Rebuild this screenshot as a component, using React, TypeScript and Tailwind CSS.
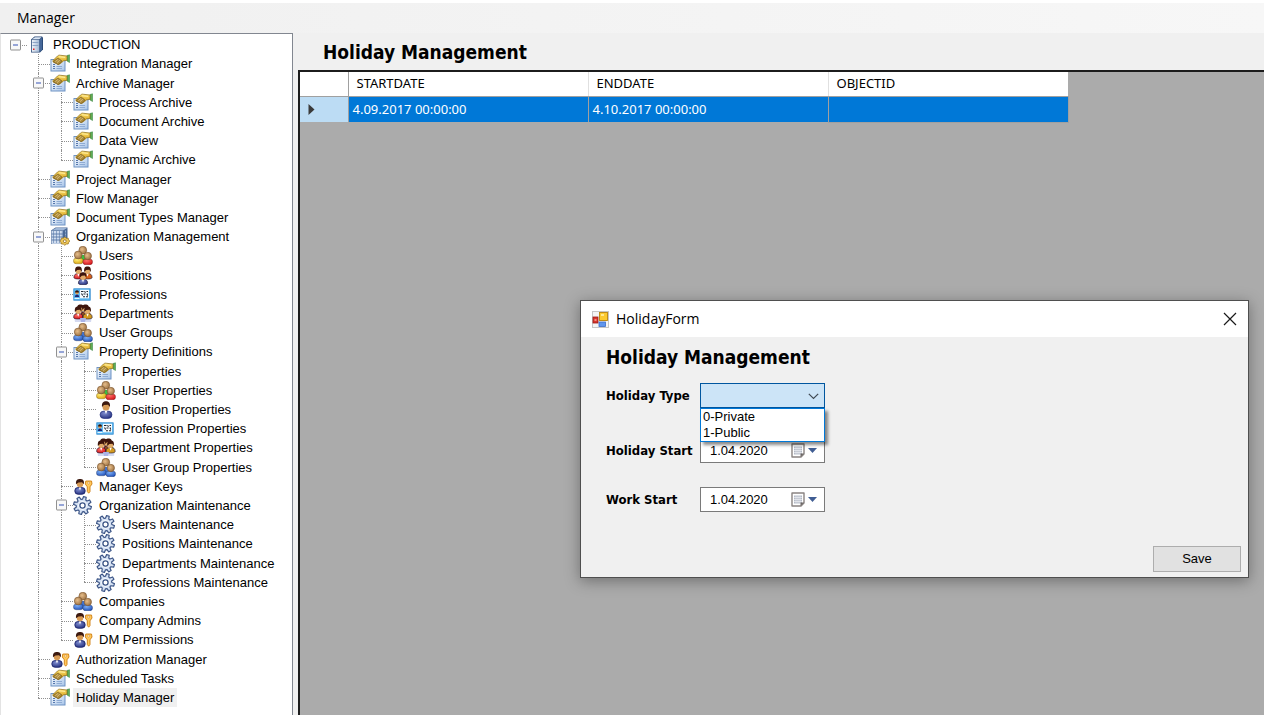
import { useState } from "react";

type IconName =
  | "server"
  | "props"
  | "building"
  | "users"
  | "positions"
  | "card"
  | "departments"
  | "groups"
  | "person"
  | "key"
  | "gear";

interface TreeItem {
  depth: number;
  label: string;
  icon: IconName;
}

const items: TreeItem[] = [
  { depth: 0, label: "PRODUCTION", icon: "server" },
  { depth: 1, label: "Integration Manager", icon: "props" },
  { depth: 1, label: "Archive Manager", icon: "props" },
  { depth: 2, label: "Process Archive", icon: "props" },
  { depth: 2, label: "Document Archive", icon: "props" },
  { depth: 2, label: "Data View", icon: "props" },
  { depth: 2, label: "Dynamic Archive", icon: "props" },
  { depth: 1, label: "Project Manager", icon: "props" },
  { depth: 1, label: "Flow Manager", icon: "props" },
  { depth: 1, label: "Document Types Manager", icon: "props" },
  { depth: 1, label: "Organization Management", icon: "building" },
  { depth: 2, label: "Users", icon: "users" },
  { depth: 2, label: "Positions", icon: "positions" },
  { depth: 2, label: "Professions", icon: "card" },
  { depth: 2, label: "Departments", icon: "departments" },
  { depth: 2, label: "User Groups", icon: "groups" },
  { depth: 2, label: "Property Definitions", icon: "props" },
  { depth: 3, label: "Properties", icon: "props" },
  { depth: 3, label: "User Properties", icon: "users" },
  { depth: 3, label: "Position Properties", icon: "person" },
  { depth: 3, label: "Profession Properties", icon: "card" },
  { depth: 3, label: "Department Properties", icon: "departments" },
  { depth: 3, label: "User Group Properties", icon: "groups" },
  { depth: 2, label: "Manager Keys", icon: "key" },
  { depth: 2, label: "Organization Maintenance", icon: "gear" },
  { depth: 3, label: "Users Maintenance", icon: "gear" },
  { depth: 3, label: "Positions Maintenance", icon: "gear" },
  { depth: 3, label: "Departments Maintenance", icon: "gear" },
  { depth: 3, label: "Professions Maintenance", icon: "gear" },
  { depth: 2, label: "Companies", icon: "groups" },
  { depth: 2, label: "Company Admins", icon: "key" },
  { depth: 2, label: "DM Permissions", icon: "key" },
  { depth: 1, label: "Authorization Manager", icon: "key" },
  { depth: 1, label: "Scheduled Tasks", icon: "props" },
  { depth: 1, label: "Holiday Manager", icon: "props" },
];

// true when another sibling at this depth follows before the branch closes
function continues(index: number, depth: number) {
  for (let i = index + 1; i < items.length; i++) {
    if (items[i].depth < depth) return false;
    if (items[i].depth === depth) return true;
  }
  return false;
}

function gearPath(cx: number, cy: number, teeth: number, outer: number, inner: number) {
  const points: string[] = [];
  for (let i = 0; i < teeth; i++) {
    const angle = (i / teeth) * Math.PI * 2 - 1.3;
    for (const [offset, radius] of [[-0.27, inner], [-0.15, outer], [0.15, outer], [0.27, inner]]) {
      points.push(`${(cx + Math.cos(angle + offset) * radius).toFixed(2)} ${(cy + Math.sin(angle + offset) * radius).toFixed(2)}`);
    }
  }
  return `M${points.join("L")}Z`;
}

const gear = gearPath(9.5, 9.5, 8, 9, 6.3);

function Gradients() {
  return (
    <svg width="0" height="0" className="absolute" aria-hidden="true">
      <defs>
        <linearGradient id="sheet" x1="0" y1="0" x2="1" y2="1">
          <stop offset="0" stopColor="#ffffff" />
          <stop offset="1" stopColor="#a5c3e8" />
        </linearGradient>
        <linearGradient id="gold" x1="0" y1="0" x2="0" y2="1">
          <stop offset="0" stopColor="#ffdf6b" />
          <stop offset="1" stopColor="#c9930c" />
        </linearGradient>
        <linearGradient id="tower" x1="0" y1="0" x2="1" y2="0">
          <stop offset="0" stopColor="#f0f5fb" />
          <stop offset="1" stopColor="#a3b8d3" />
        </linearGradient>
        <radialGradient id="skin" cx="0.4" cy="0.4" r="0.7">
          <stop offset="0" stopColor="#e6bd8a" />
          <stop offset="1" stopColor="#94693a" />
        </radialGradient>
        <radialGradient id="blueBody" cx="0.4" cy="0.3" r="0.8">
          <stop offset="0" stopColor="#7fb0f5" />
          <stop offset="1" stopColor="#1747b4" />
        </radialGradient>
        <radialGradient id="navyBody" cx="0.4" cy="0.3" r="0.8">
          <stop offset="0" stopColor="#7f8dcf" />
          <stop offset="1" stopColor="#1c2878" />
        </radialGradient>
        <radialGradient id="redBody" cx="0.4" cy="0.3" r="0.8">
          <stop offset="0" stopColor="#ff7068" />
          <stop offset="1" stopColor="#cf0a10" />
        </radialGradient>
        <radialGradient id="yellowBody" cx="0.4" cy="0.3" r="0.8">
          <stop offset="0" stopColor="#fff07a" />
          <stop offset="1" stopColor="#d79a00" />
        </radialGradient>
      </defs>
    </svg>
  );
}

function Trio({ left, right, mid }: { left: string; right: string; mid: string }) {
  return (
    <g>
      <path d="M6 9h8v6H6z" fill={mid} />
      <circle cx="9.8" cy="4.2" r="3.9" fill="url(#skin)" stroke="#7a5630" strokeWidth=".6" />
      <rect x=".4" y="12" width="9.800" height="5.800" rx="2.800" fill={left} stroke="#00000066" strokeWidth=".5" />
      <circle cx="5.200" cy="9" r="3.900" fill="url(#skin)" stroke="#7a5630" strokeWidth=".6" />
      <rect x="9.800" y="13" width="9.800" height="5.700" rx="2.800" fill={right} stroke="#00000066" strokeWidth=".5" />
      <circle cx="14.800" cy="10" r="3.700" fill="url(#skin)" stroke="#7a5630" strokeWidth=".6" />
    </g>
  );
}

function Figure({ x, y, body }: { x: number; y: number; body: string }) {
  return (
    <g transform={`translate(${x} ${y})`}>
      <path d="M-4.600 9c0-3 1.500-4 4.600-4s4.600 1 4.600 4c0 2-9.200 2-9.200 0z" fill={body} stroke="#1a1430" strokeWidth=".6" />
      <path d="M-1.200 5h2.400L0 8.300z" fill="#fff" />
      <circle cx="0" cy="2.600" r="2.900" fill="#e0ab68" />
      <path d="M-3.300 3.500c-.5-4.400 1-5.500 3.300-5.500s3.800 1.100 3.300 5.500L1.800 1.200l-3 .2z" fill="#3d150c" />
    </g>
  );
}

function TreeIcon({ name }: { name: IconName }) {
  return (
    <svg width="20" height="19" viewBox="0 0 20 19" className="shrink-0" aria-hidden="true">
      {name === "server" && (
        <g>
          <path d="M4 4.500L7.500 1.500h7.500l1 1v12L13 17.500H4z" fill="#2c4b78" />
          <path d="M12.800 4.800L15 2.800v11.500l-2.200 2.200z" fill="#46689a" />
          <path d="M5 4.300l3-2h6.500l-2.200 2z" fill="#dbe6f4" />
          <rect x="4.800" y="4.800" width="7.500" height="12" fill="url(#tower)" />
          <path d="M5.500 7.500h6M5.500 10.500h6" stroke="#8ba4c6" />
          <rect x="6" y="13.500" width="1.500" height="1.500" fill="#e02020" />
        </g>
      )}
      {name === "props" && (
        <g>
          <rect x="1" y="5.500" width="14" height="11.500" fill="url(#sheet)" stroke="#6f93c4" />
          <path d="M3 10.500h2M3 12.500h2M3 14.500h2" stroke="#5577ad" />
          <path d="M6.500 12.500h5.500M6.500 14.500h5.500" stroke="#8eabd4" />
          <path d="M17 1.500L19.500.8v7.700L17 7z" fill="#5fae57" stroke="#2f7d38" strokeWidth=".5" />
          <path d="M3 6.500L7.500 2c1-.9 2-1 3.200-.7L17 2v4.300l-3.500.6L10.500 9.500 8.800 10.500 3 8z" fill="url(#gold)" stroke="#8a6a18" strokeWidth=".7" />
          <path d="M3.500 7.300L8 4l4 3-3.200 3.300-1.500.2-1-1.200-1.500-.3z" fill="#ad8c3e" stroke="#755a1c" strokeWidth=".6" />
          <path d="M5.300 7.600L8.200 5.300M6.900 8.800l3-2.700" stroke="#e2c681" strokeWidth=".8" />
          <path d="M9 2.800l6 .6" stroke="#fff0a8" strokeWidth=".9" />
        </g>
      )}
      {name === "building" && (
        <g>
          <path d="M1 3.500L5.500.5h12V13L14 17H1z" fill="#4a6996" />
          <path d="M1.500 3.800h11.500v13H1.500z" fill="#dce7f5" />
          <path d="M3.500 4v12M6.500 4v12M9.500 4v12M12.300 4v12" stroke="#8aa4c9" strokeWidth="1.300" />
          <path d="M1.500 7h11.500M1.500 10h11.500M1.500 13h11.500" stroke="#5877a5" strokeWidth=".9" />
          <path d="M2 3.300L6 1h11l-3.500 2.300z" fill="#9fb7d8" />
          <path d="M15.500 3.500v9" stroke="#8fabd0" strokeDasharray="2 1" />
          <path d="M14.800 10l1.500 1.200 2 .1.300 1.500 1.200 1.200-1.200 1.500-.4 1.500-2 .1-1.400 1.200-1.500-1.200-2-.1-.3-1.600L9.800 14l1.200-1.300.4-1.500 2-.1z" fill="#edc65a" stroke="#906a12" strokeWidth=".7" />
          <circle cx="14.800" cy="14.200" r="1.400" fill="#fff" stroke="#906a12" strokeWidth=".8" />
        </g>
      )}
      {name === "users" && <Trio left="url(#yellowBody)" right="url(#redBody)" mid="#3bc043" />}
      {name === "groups" && <Trio left="url(#blueBody)" right="url(#blueBody)" mid="#3f73d2" />}
      {name === "positions" && (
        <g>
          <Figure x={5.5} y={2.5} body="url(#redBody)" />
          <Figure x={14.5} y={2.5} body="#d8621a" />
          <Figure x={10} y={8.3} body="url(#navyBody)" />
        </g>
      )}
      {name === "departments" && (
        <g>
          <path d="M1 12h18l-1 6H2z" fill="#d5daf0" />
          <Figure x={7.5} y={2.5} body="#8e1820" />
          <Figure x={12.5} y={2.5} body="#8a4a20" />
          <Figure x={5.2} y={4.5} body="url(#redBody)" />
          <Figure x={14.6} y={4.5} body="#d49a20" />
          <path d="M7 14h6l-1 4H8z" fill="#aab4e8" />
        </g>
      )}
      {name === "card" && (
        <g>
          <rect x=".8" y="3.800" width="16.400" height="11.400" fill="#62bbf2" stroke="#2c86cc" strokeWidth=".8" />
          <rect x="7" y="4.800" width="9" height="8.500" fill="#f4fafe" />
          <circle cx="4" cy="7.800" r="1.700" fill="#e8a050" />
          <path d="M2 7.500c0-3 4-3 4 0z" fill="#35150c" />
          <path d="M1.800 12c0-3.500 4.400-3.500 4.400 0z" fill="#1c2878" />
          <path d="M1.500 13.500h5" stroke="#e8f5ff" />
          <path d="M8 6.500h2.500M11.500 6.300l1 1.500M13.500 6.500h1.500M8.500 8.500l1.200 2M10.500 9h2M14 8.500l.7 2.200M10 11.800h2M13 11.800h2" stroke="#20242c" strokeWidth="1.100" />
        </g>
      )}
      {name === "person" && (
        <g>
          <rect x="4" y="11" width="12" height="7.500" rx="4" fill="url(#navyBody)" stroke="#1c2878" strokeWidth=".6" />
          <path d="M8.500 10.500h3L10 14z" fill="#fff" />
          <circle cx="10" cy="7" r="3.500" fill="#d79a55" />
          <path d="M6 7c-.5-4.500 1.500-5.800 4-5.800s4.500 1.300 4 5.800L12 4.800l-4 .3z" fill="#3d1a10" />
        </g>
      )}
      {name === "key" && (
        <g>
          <rect x="1.800" y="10.500" width="10.400" height="6.800" rx="3.300" fill="url(#navyBody)" stroke="#141d66" strokeWidth=".8" />
          <path d="M5.800 10.500h2.400L7 13.500z" fill="#fff" />
          <circle cx="7" cy="7" r="3.200" fill="#d79a55" />
          <path d="M3 7.200C2.600 3 4.500 2 7 2s4.400 1 4 5.200L9 5.200l-3.500.2z" fill="#3d1a10" />
          <path d="M12.800 4h5.700l.5 3-2 2.800v4.700l-1.300 1.700-1.400-1.700V9.800l-2-2.800z" fill="#ffc85c" stroke="#cf7d10" strokeWidth=".9" strokeLinejoin="round" />
          <circle cx="15.600" cy="6" r="1" fill="#fff" stroke="#cf7d10" strokeWidth=".5" />
        </g>
      )}
      {name === "gear" && (
        <g>
          <path d={gear} fill="#d5e1f3" stroke="#3b5486" strokeWidth="1.200" strokeLinejoin="round" />
          <circle cx="9.500" cy="9.500" r="4.400" fill="#f3f7fd" />
          <circle cx="9.500" cy="9.500" r="2.600" fill="#fff" stroke="#3b5486" strokeWidth="1.300" />
        </g>
      )}
    </svg>
  );
}

function Guide({ index, level }: { index: number; level: number }) {
  const { depth } = items[index];
  const own = level === depth;
  const down = continues(index, level);
  const expandable = items[index + 1]?.depth > depth;

  return (
    <span className="relative w-[23px] shrink-0 self-stretch" aria-hidden="true">
      {level > 0 && (own || down) && (
        <span
          className={
            down
              ? "absolute inset-y-0 left-[11px] border-l border-dotted border-[#909090]"
              : "absolute top-0 bottom-1/2 left-[11px] border-l border-dotted border-[#909090]"
          }
        />
      )}
      {own && <span className="absolute top-1/2 right-0 left-[11px] border-t border-dotted border-[#909090]" />}
      {own && expandable && (
        <span className="absolute top-1/2 left-[6px] flex h-[11px] w-[11px] -translate-y-1/2 items-center justify-center rounded-[1px] border border-[#919191] bg-[#f8f8f8]">
          <span className="h-px w-[5px] bg-[#3553b5]" />
        </span>
      )}
    </span>
  );
}

function TreeView() {
  const [selected, setSelected] = useState("Holiday Manager");

  return (
    <ul
      role="tree"
      className="flex w-[293px] shrink-0 flex-col border border-b-0 border-l-[#e3e3e3] border-t-[#828790] border-r-[#828790] bg-white pt-px pb-2 pl-[3px]"
    >
      {items.map((item, index) => (
        <li
          key={item.label}
          role="treeitem"
          aria-level={item.depth + 1}
          aria-selected={item.label === selected}
          className="flex min-h-[19px] flex-1 items-center"
        >
          {Array.from({ length: item.depth + 1 }, (_, level) => (
            <Guide key={level} index={index} level={level} />
          ))}
          <TreeIcon name={item.icon} />
          <button
            onClick={() => setSelected(item.label)}
            className={
              item.label === selected
                ? "ml-[3px] bg-[#f0f0f0] px-[3px] text-[13px] leading-[19px] whitespace-nowrap"
                : "ml-[3px] px-[3px] text-[13px] leading-[19px] whitespace-nowrap"
            }
          >
            {item.label}
          </button>
        </li>
      ))}
    </ul>
  );
}

function DataGrid() {
  return (
    <table className="w-[768px] table-fixed border-collapse font-['Noto_Sans','Open_Sans',sans-serif] text-[13px]">
      <colgroup>
        <col className="w-[48px]" />
        <col className="w-[240px]" />
        <col className="w-[240px]" />
        <col className="w-[240px]" />
      </colgroup>
      <thead>
        <tr className="h-[24px] bg-white text-left">
          <th className="border-r border-b border-[#a0a0a0]" aria-label="Row" />
          <th className="border-r border-b border-r-[#e0e0e0] border-b-[#a0a0a0] px-2 font-normal">STARTDATE</th>
          <th className="border-r border-b border-r-[#e0e0e0] border-b-[#a0a0a0] px-2 font-normal">ENDDATE</th>
          <th className="border-b border-b-[#a0a0a0] px-2 font-normal">OBJECTID</th>
        </tr>
      </thead>
      <tbody>
        <tr className="h-[26px] bg-[#0078d7] text-white">
          <td className="border-r border-[#a0a0a0] bg-[#bcdcf4] pl-2">
            <svg width="7" height="11" viewBox="0 0 7 11" aria-hidden="true">
              <path d="M.5 0l6 5.500-6 5.500z" fill="#3a3a3a" />
            </svg>
          </td>
          <td className="border-r border-[#a0a0a0] px-1">4.09.2017 00:00:00</td>
          <td className="border-r border-[#a0a0a0] px-1">4.10.2017 00:00:00</td>
          <td className="border-r border-b border-[#a0a0a0] px-1" />
        </tr>
      </tbody>
    </table>
  );
}

function DateField({ id, label }: { id: string; label: string }) {
  const [value, setValue] = useState("1.04.2020");

  return (
    <div className="flex h-[25px] items-center">
      <label htmlFor={id} className="w-[94px] shrink-0 whitespace-nowrap font-['DejaVu_Sans_Condensed','DejaVu_Sans',sans-serif] text-[13px] font-bold">
        {label}
      </label>
      <div className="flex h-[25px] w-[125px] items-center border border-[#7a7a7a] bg-white pr-[7px] pl-[9px]">
        <input
          id={id}
          value={value}
          onChange={(e) => setValue(e.target.value)}
          className="min-w-0 flex-1 bg-transparent text-[13px] outline-none"
        />
        <button type="button" aria-label={`Open ${label} calendar`} className="flex items-center gap-[3px]">
          <svg width="14" height="15" viewBox="0 0 14 15" aria-hidden="true">
            <path d="M1 1h12v10l-3 3H1z" fill="#fff" stroke="#8a8482" strokeWidth="1.400" strokeLinejoin="round" />
            <path d="M3 3.500h8v8H3z" fill="#b4bac6" />
            <path d="M3 5.500h8M3 7.500h8M3 9.500h8M5 3.500v8M7 3.500v8M9 3.500v8" stroke="#f3f5f8" strokeWidth=".6" />
            <path d="M13 10.500l-3.500 3.500v-3.500z" fill="#6c6664" />
          </svg>
          <svg width="9" height="5" viewBox="0 0 9 5" aria-hidden="true">
            <path d="M0 0h9L4.500 5z" fill="#405d93" />
          </svg>
        </button>
      </div>
    </div>
  );
}

function HolidayDialog() {
  const [type, setType] = useState("");

  return (
    <section
      role="dialog"
      aria-labelledby="dialog-title"
      className="absolute top-[228px] right-[15px] w-[669px] border border-[#4f4f4f] bg-[#f0f0f0] shadow-[0_3px_14px_rgba(0,0,0,0.35)]"
    >
      <header className="flex h-[36px] items-center bg-white pr-[11px] pl-[11px]">
        <svg width="17" height="17" viewBox="0 0 17 17" aria-hidden="true">
          <rect x=".5" y=".5" width="16" height="16" fill="#f4f4f4" stroke="#c6c6c6" />
          <rect x="1" y="6" width="5" height="6" fill="#d8352c" stroke="#9c1a14" strokeWidth=".8" />
          <rect x="7.500" y="1.500" width="8" height="8" fill="#fbc92e" stroke="#b98409" strokeWidth=".9" />
          <rect x="7" y="11" width="6.500" height="4.500" fill="#5f96ee" stroke="#3a6cc8" strokeWidth=".8" />
          <path d="M2.500 8h2v2h-2z" fill="#f28c80" />
          <path d="M9 3h3v2H9z" fill="#ffe88f" />
        </svg>
        <h1 id="dialog-title" className="ml-[7px] flex-1 font-['Open_Sans','Noto_Sans',sans-serif] text-[14px] leading-4">
          HolidayForm
        </h1>
        <button aria-label="Close">
          <svg width="14" height="14" viewBox="0 0 14 14" aria-hidden="true">
            <path d="M1 1l12 12M13 1L1 13" stroke="#1a1a1a" strokeWidth="1.200" />
          </svg>
        </button>
      </header>
      <form className="flex flex-col pt-2 pr-[7px] pb-[5px] pl-[25px]" onSubmit={(e) => e.preventDefault()}>
        <h2 className="font-['DejaVu_Sans_Condensed','DejaVu_Sans',sans-serif] text-[19px] leading-6 font-bold">
          Holiday Management
        </h2>
        <div className="mt-[14px] flex h-[25px] items-center">
          <label htmlFor="type" className="w-[94px] shrink-0 whitespace-nowrap font-['DejaVu_Sans_Condensed','DejaVu_Sans',sans-serif] text-[13px] font-bold">
            Holiday Type
          </label>
          <div className="relative flex h-[25px] w-[125px]">
            <select
              id="type"
              value={type}
              onChange={(e) => setType(e.target.value)}
              className="w-full appearance-none border border-[#00569f] bg-[#cce4f7] px-1 text-[13px] outline-none"
            >
              <option value="" />
              <option value="0">0-Private</option>
              <option value="1">1-Public</option>
            </select>
            <svg width="11" height="7" viewBox="0 0 11 7" className="pointer-events-none absolute top-[10px] right-[6px]" aria-hidden="true">
              <path d="M.8.800l4.700 4.700L10.200.800" fill="none" stroke="#404a54" strokeWidth="1.200" />
            </svg>
            <ul
              role="listbox"
              aria-label="Holiday Type"
              className="absolute top-full left-0 z-10 w-full border border-[#0078d7] bg-white pl-[2px] text-[13px] leading-4 shadow-[3px_3px_3px_rgba(0,0,0,0.45)]"
            >
              <li role="option" aria-selected={type === "0"} onClick={() => setType("0")}>
                0-Private
              </li>
              <li role="option" aria-selected={type === "1"} onClick={() => setType("1")}>
                1-Public
              </li>
            </ul>
          </div>
        </div>
        <div className="mt-[30px]">
          <DateField id="holiday-start" label="Holiday Start" />
        </div>
        <div className="mt-[24px]">
          <DateField id="work-start" label="Work Start" />
        </div>
        <button className="mt-[34px] h-[26px] w-[88px] self-end border border-[#adadad] bg-[#e1e1e1] text-[13px]">
          Save
        </button>
      </form>
    </section>
  );
}

function App() {
  return (
    <div className="flex min-h-screen flex-col bg-white pt-[3px] pr-1 pb-[2px] font-['Liberation_Sans',Arial,sans-serif] text-black">
      <Gradients />
      <nav className="flex h-[30px] items-center bg-linear-to-r from-[#f0f0f0] to-[#f7f7f7] pl-[17px]">
        <button className="font-['Open_Sans','Noto_Sans',sans-serif] text-[14px] leading-4">Manager</button>
      </nav>
      <div className="flex flex-1 bg-[#f0f0f0]">
        <TreeView />
        <main className="ml-[5px] flex min-w-0 flex-1 flex-col">
          <h2 className="flex h-[37px] items-center pt-px pl-[25px] font-['DejaVu_Sans_Condensed','DejaVu_Sans',sans-serif] text-[19px] font-bold">
            Holiday Management
          </h2>
          <div className="relative flex-1 border-t-2 border-l-2 border-[#1c1c1c] bg-[#ababab]">
            <DataGrid />
            <HolidayDialog />
          </div>
        </main>
      </div>
    </div>
  );
}

export default App;
